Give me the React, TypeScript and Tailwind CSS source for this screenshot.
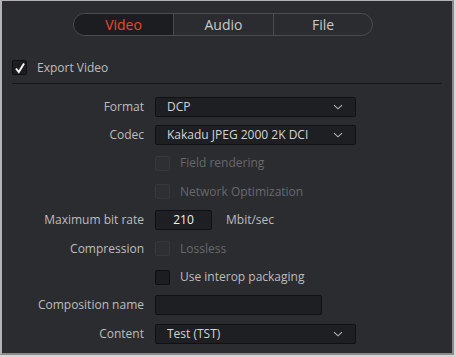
import React from 'react';

const font = { fontFamily: '"Open Sans", "Liberation Sans", sans-serif' };

function Chevron() {
  return (
    <svg width="10" height="6" viewBox="0 0 10 6" className="ml-auto mr-[12px]">
      <path d="M1 1.2 L5 4.8 L9 1.2" fill="none" stroke="#b4b4b4" strokeWidth="1.1" />
    </svg>
  );
}

function Box({ checked, disabled }: { checked?: boolean; disabled?: boolean }) {
  return (
    <div
      className={
        'w-[15px] h-[15px] rounded-[2px] border flex items-center justify-center ' +
        (disabled ? 'bg-[#2e2f33] border-[#37383c]' : 'bg-[#1c1d20] border-[#0f0f11]')
      }
    >
      {checked && (
        <svg width="12" height="12" viewBox="0 0 12 12">
          <path d="M2 6.5 L4.8 10 L10 1.5" fill="none" stroke="#f4f4f4" strokeWidth="2" />
        </svg>
      )}
    </div>
  );
}

function Row({ label, children }: { label?: string; children: React.ReactNode }) {
  return (
    <div className="flex items-center h-[28.4px]">
      <div className="w-[142px] text-right text-[12px] text-[#bdbdbd]">{label}</div>
      <div className="ml-[11px] flex items-center">{children}</div>
    </div>
  );
}

function Select({ value }: { value: string }) {
  return (
    <div className="w-[201px] h-[20px] bg-[#1e1f22] border border-[#111113] rounded-[2px] flex items-center pl-[11px] text-[12px] text-[#d4d4d4]">
      {value}
      <Chevron />
    </div>
  );
}

export default function App() {
  return (
    <div className="w-[456px] h-[357px] bg-[#d6d6d6] pr-[2px] pb-[2px]" style={font}>
      <div className="w-[454px] h-[355px] bg-[#2b2c30] border-l-2 border-t border-r-2 border-b-2 border-l-[#b4b4b4] border-t-[#b4b4b4] border-r-[#8a8a8a] border-b-[#8a8a8a] flex flex-col">
        <div className="mt-[12px] ml-[71px] w-[300px] h-[23px] rounded-full border border-[#4b4c51] flex overflow-hidden text-[14px]">
          <div className="w-[100px] bg-[#1c1d20] text-[#ec4630] flex items-center justify-center border-r border-[#4b4c51]">Video</div>
          <div className="w-[100px] text-[#c9c9c9] flex items-center justify-center border-r border-[#4b4c51]">Audio</div>
          <div className="flex-1 text-[#c9c9c9] flex items-center justify-center">File</div>
        </div>

        <div className="mt-[24px] ml-[10px] flex items-center h-[15px]">
          <Box checked />
          <span className="ml-[10px] text-[12px] text-[#bdbdbd]">Export Video</span>
        </div>

        <div className="mt-[8px] ml-[10px] w-[430px] h-px bg-[#18181b]" />

        <div className="mt-[8.5px] flex flex-col">
          <Row label="Format">
            <Select value="DCP" />
          </Row>
          <Row label="Codec">
            <Select value="Kakadu JPEG 2000 2K DCI" />
          </Row>
          <Row>
            <Box disabled />
            <span className="ml-[10px] text-[12px] text-[#67686b]">Field rendering</span>
          </Row>
          <Row>
            <Box disabled />
            <span className="ml-[10px] text-[12px] text-[#67686b]">Network Optimization</span>
          </Row>
          <Row label="Maximum bit rate">
            <div className="w-[57px] h-[20px] bg-[#1e1f22] border border-[#111113] rounded-[2px] flex items-center justify-center text-[12px] text-[#f0f0f0]">
              210
            </div>
            <span className="ml-[14px] text-[12px] text-[#bdbdbd]">Mbit/sec</span>
          </Row>
          <Row label="Compression">
            <Box disabled />
            <span className="ml-[10px] text-[12px] text-[#67686b]">Lossless</span>
          </Row>
          <Row>
            <Box />
            <span className="ml-[10px] text-[12px] text-[#bdbdbd]">Use interop packaging</span>
          </Row>
          <Row label="Composition name">
            <div className="w-[167px] h-[20px] bg-[#1e1f22] border border-[#111113] rounded-[2px]" />
          </Row>
          <Row label="Content">
            <Select value="Test (TST)" />
          </Row>
        </div>
      </div>
    </div>
  );
}
